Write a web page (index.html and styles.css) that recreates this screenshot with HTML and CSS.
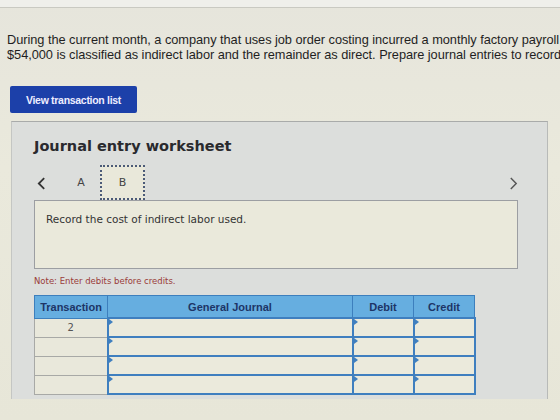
FILE: index.html
```html
<!DOCTYPE html>
<html>
    <head>
        <title>Journal entry worksheet</title>
        <link rel="stylesheet" href="styles.css">
    </head>
    <body>
        <div class="top-strip"></div>

        <div class="question">
            <p>During the current month, a company that uses job order costing incurred a monthly factory payroll</p>
            <p>$54,000 is classified as indirect labor and the remainder as direct. Prepare journal entries to record</p>
        </div>

        <button class="view-btn">View transaction list</button>

        <div class="worksheet">
            <h2>Journal entry worksheet</h2>

            <div class="tabs">
                <span class="arrow">
                    <svg viewBox="0 0 10 14" width="9" height="13">
                        <path d="M 8 1 L 2 7 L 8 13" fill="none" stroke="#333" stroke-width="2" />
                    </svg>
                </span>
                <span class="tab">A</span>
                <span class="tab active">B</span>
                <span class="spacer"></span>
                <span class="arrow">
                    <svg viewBox="0 0 10 14" width="9" height="13">
                        <path d="M 2 1 L 8 7 L 2 13" fill="none" stroke="#555" stroke-width="1.6" />
                    </svg>
                </span>
            </div>

            <div class="entry-box">Record the cost of indirect labor used.</div>

            <div class="note">Note: Enter debits before credits.</div>

            <table class="journal">
                <thead>
                    <tr>
                        <th class="col-trans">Transaction</th>
                        <th class="col-gj">General Journal</th>
                        <th class="col-debit">Debit</th>
                        <th class="col-credit">Credit</th>
                    </tr>
                </thead>
                <tbody>
                    <tr>
                        <td class="trans">2</td>
                        <td class="cell"></td>
                        <td class="cell"></td>
                        <td class="cell"></td>
                    </tr>
                    <tr>
                        <td class="trans"></td>
                        <td class="cell"></td>
                        <td class="cell"></td>
                        <td class="cell"></td>
                    </tr>
                    <tr>
                        <td class="trans"></td>
                        <td class="cell"></td>
                        <td class="cell"></td>
                        <td class="cell"></td>
                    </tr>
                    <tr>
                        <td class="trans"></td>
                        <td class="cell"></td>
                        <td class="cell"></td>
                        <td class="cell"></td>
                    </tr>
                </tbody>
            </table>
        </div>
    </body>
</html>
```

FILE: styles.css
```css
html, body {
    height: 100%;
}

body {
    margin: 0;
    padding: 0;
    overflow: hidden;
    background: linear-gradient(180deg, #e6e5dc 0%, #eae9dc 40%, #e7e6d8 100%);
    font-family: 'Liberation Sans', Arial, sans-serif;
    color: #222;
}

.top-strip {
    height: 7px;
    background: #efefeb;
    border-bottom: 1px solid #c9c9c2;
}

.question {
    padding: 24px 0 0 7px;
    white-space: nowrap;
    overflow: hidden;
}

.question p {
    margin: 0;
    font-size: 12.8px;
    line-height: 15px;
    letter-spacing: -0.05px;
    color: #1f1f1f;
}

.view-btn {
    display: block;
    margin: 24px 0 0 10px;
    width: 127px;
    height: 27px;
    padding: 0;
    border: none;
    border-radius: 2px;
    background: #1c40a9;
    color: #eef;
    font-family: 'Liberation Sans', Arial, sans-serif;
    font-size: 10.5px;
    font-weight: bold;
    letter-spacing: -0.3px;
}

.worksheet {
    margin: 8px 12px 0 11px;
    height: 262px;
    padding: 15px 0 0 22px;
    background: #dcdedc;
    border-top: 1px solid #a9abaa;
    border-left: 1px solid #c4c6c3;
    border-right: 1px solid #b8bab8;
    font-family: 'DejaVu Sans', Verdana, sans-serif;
}

.worksheet h2 {
    margin: 0;
    font-size: 14.5px;
    line-height: 18px;
    color: #2a2a2e;
}

.tabs {
    display: flex;
    align-items: center;
    height: 35px;
    margin-top: 10px;
    width: 489px;
}

.arrow {
    display: flex;
    width: 20px;
    justify-content: center;
    padding-top: 2px;
}

.tabs .arrow:first-child {
    margin-left: -3px;
    margin-right: 8px;
}

.tab {
    width: 44px;
    height: 35px;
    display: flex;
    align-items: center;
    justify-content: center;
    font-size: 11px;
    color: #444;
}

.tab.active {
    box-sizing: border-box;
    width: 45px;
    margin-left: -3px;
    background: #e9e8da;
    border: 2px dotted #4b5a78;
}

.spacer {
    flex: 1;
}

.entry-box {
    box-sizing: border-box;
    width: 484px;
    height: 69px;
    padding: 12px 11px;
    background: #eae9db;
    border: 1px solid #9c9ea2;
    font-size: 10.5px;
    color: #333;
}

.note {
    margin-top: 7px;
    font-size: 8.5px;
    color: #9a3c3a;
}

.journal {
    margin-top: 9px;
    border-collapse: collapse;
    font-family: 'DejaVu Sans', Verdana, sans-serif;
}

.journal th {
    height: 21px;
    padding: 0;
    background: #66aee0;
    border: 1px solid #3d7fbd;
    font-family: 'Liberation Sans', Arial, sans-serif;
    font-size: 11px;
    color: #1d3566;
}

.col-trans { width: 72px; }
.col-gj { width: 244px; }
.col-debit { width: 60px; }
.col-credit { width: 60px; }

.journal td {
    height: 17px;
    padding: 0;
}

.journal td.trans {
    background: #e9e8db;
    border: 1px solid #a8a9a6;
    border-right: 2px solid #3f7fbf;
    text-align: center;
    font-size: 10px;
    color: #555;
}

.journal td.cell {
    position: relative;
    background: #ebeadc;
    border: 2px solid #3f7fbf;
}

/* small marker in the corner of each input cell */
.journal td.cell::before {
    content: "";
    position: absolute;
    top: 0;
    left: 0;
    border-top: 3px solid transparent;
    border-bottom: 3px solid transparent;
    border-left: 4px solid #3f7fbf;
}
```
